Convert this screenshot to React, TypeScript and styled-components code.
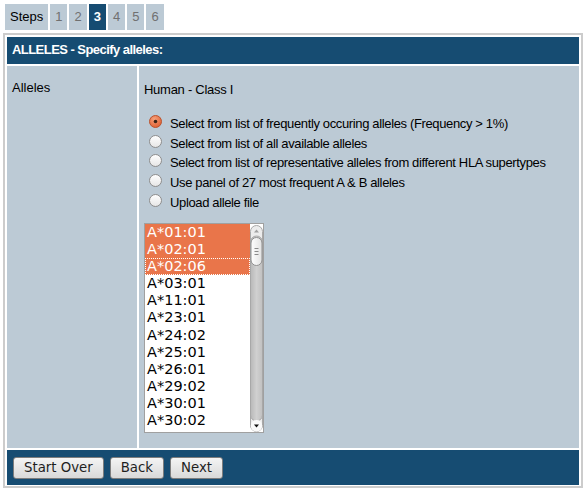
import React from "react";
import styled, { createGlobalStyle } from "styled-components";

const Global = createGlobalStyle`
  html, body { margin: 0; padding: 0; background: #fff; }
  body { font-family: "Liberation Sans", Arial, sans-serif; font-size: 13px; color: #000; }
`;

const BLUE = "#164c72";
const PALE = "#bccad5";

const Page = styled.div`
  padding: 4px 0 0 3px;
  width: 580px;
`;

const Tabs = styled.div`
  display: flex;
  gap: 2px;
  margin-left: 2px;
`;

const Tab = styled.div<{ $active?: boolean; $label?: boolean }>`
  height: 26px;
  line-height: 26px;
  padding: 0 5px;
  min-width: 7px;
  text-align: center;
  background: ${(p) => (p.$active ? BLUE : PALE)};
  color: ${(p) => (p.$active ? "#fff" : p.$label ? "#000" : "#707070")};
  font-weight: ${(p) => (p.$active ? "bold" : "normal")};
`;

const Box = styled.div`
  margin-top: 3px;
  border: 2px solid #cccccc;
  padding: 2px 2px 1px;
  background: #fff;
  display: grid;
  gap: 2px;
`;

const Header = styled.div`
  background: ${BLUE};
  color: #fff;
  font-weight: bold;
  height: 27px;
  box-sizing: border-box;
  padding: 5px 0 0 5px;
  line-height: 15px;
  letter-spacing: -0.55px;
`;

const BodyRow = styled.div`
  display: grid;
  grid-template-columns: 130px 1fr;
  gap: 2px;
`;

const LabelCell = styled.div`
  background: ${PALE};
  padding: 14px 5px 0;
  line-height: 15px;
`;

const ValueCell = styled.div`
  background: ${PALE};
  padding: 16px 5px 15px;
  display: flex;
  flex-direction: column;
`;

const Title = styled.div`
  line-height: 15px;
  letter-spacing: -0.27px;
`;

const RadioList = styled.div`
  margin-top: 15px;
  display: flex;
  flex-direction: column;
`;

const RadioRow = styled.div`
  height: 19.7px;
  display: flex;
  align-items: flex-start;
`;

const RadioMark = styled.svg`
  margin: 3px 8px 0 5px;
  flex: none;
`;

const RadioText = styled.span`
  margin-top: 4px;
  line-height: 15px;
  white-space: nowrap;
  letter-spacing: -0.36px;
`;

const ListBox = styled.div`
  margin-top: 12.5px;
  width: 120px;
  height: 210px;
  box-sizing: border-box;
  border: 1px solid #a0a0a0;
  background: #fff;
  display: flex;
  overflow: hidden;
`;

const Options = styled.div`
  flex: 1;
  overflow: hidden;
`;

const Option = styled.div<{ $sel?: boolean; $focus?: boolean }>`
  height: 17.1px;
  line-height: 17px;
  padding-left: 2px;
  box-sizing: border-box;
  font-family: "DejaVu Sans", sans-serif;
  font-size: 14.5px;
  background: ${(p) => (p.$sel ? "#e9754a" : "#fff")};
  color: ${(p) => (p.$sel ? "#fff" : "#000")};
  outline: ${(p) => (p.$focus ? "1px dotted #fff" : "none")};
  outline-offset: -1px;
  white-space: nowrap;
`;

const ScrollBar = styled.svg`
  flex: none;
  display: block;
  margin-top: 1px;
`;

const Footer = styled.div`
  background: ${BLUE};
  height: 35px;
  box-sizing: border-box;
  padding: 7px 6px 0;
  display: flex;
  align-items: flex-start;
  gap: 6px;
`;

const Button = styled.button`
  height: 22px;
  padding: 0 10px;
  border: 1px solid #7d7d7d;
  border-radius: 3px;
  background: linear-gradient(#f4f4f4, #d9d9d9);
  font-family: "DejaVu Sans", sans-serif;
  font-size: 13.3px;
  color: #1e1e1e;
  line-height: 20px;
  cursor: pointer;
`;

const Radio = ({ checked }: { checked?: boolean }) => (
  <RadioMark width="13" height="13" viewBox="0 0 13 13">
    <defs>
      <radialGradient id="ro" cx="0.4" cy="0.3" r="0.8">
        <stop offset="0" stopColor="#f6a07a" />
        <stop offset="1" stopColor="#dc5a2c" />
      </radialGradient>
      <linearGradient id="rw" x1="0" y1="0" x2="0" y2="1">
        <stop offset="0" stopColor="#ffffff" />
        <stop offset="1" stopColor="#e6e6e6" />
      </linearGradient>
    </defs>
    {checked ? (
      <>
        <circle cx="6.5" cy="6.5" r="6" fill="url(#ro)" stroke="#b9532e" />
        <circle cx="6.5" cy="6.5" r="1.8" fill="#3a2418" />
      </>
    ) : (
      <circle cx="6.5" cy="6.5" r="6" fill="url(#rw)" stroke="#8c8c8c" />
    )}
  </RadioMark>
);

const Scroll = () => (
  <ScrollBar width="13" height="207" viewBox="0 0 13 207">
    <defs>
      <linearGradient id="tr" x1="0" y1="0" x2="1" y2="0">
        <stop offset="0" stopColor="#b8b8b8" />
        <stop offset="0.5" stopColor="#d0d0d0" />
        <stop offset="1" stopColor="#c0c0c0" />
      </linearGradient>
      <linearGradient id="th" x1="0" y1="0" x2="1" y2="0">
        <stop offset="0" stopColor="#ffffff" />
        <stop offset="1" stopColor="#e2e2e2" />
      </linearGradient>
    </defs>
    <rect x="0.5" y="0.5" width="12" height="206" rx="6" fill="#ececec" stroke="#a8a8a8" />
    <rect x="0.5" y="11" width="12" height="185" rx="6" fill="url(#tr)" stroke="#a8a8a8" />
    <rect x="1" y="12.5" width="11" height="28" rx="5.5" fill="url(#th)" stroke="#8f8f8f" />
    <line x1="4.5" y1="23.5" x2="8.5" y2="23.5" stroke="#8a8a8a" />
    <line x1="4.5" y1="26.5" x2="8.5" y2="26.5" stroke="#8a8a8a" />
    <line x1="4.5" y1="29.5" x2="8.5" y2="29.5" stroke="#8a8a8a" />
    <path d="M4 7.5 L6.5 4.5 L9 7.5 Z" fill="#a0a0a0" />
    <rect x="1" y="195" width="11" height="11.5" rx="5" fill="#fafafa" />
    <path d="M4 199.5 L9 199.5 L6.5 202.5 Z" fill="#111" />
  </ScrollBar>
);

const alleles = [
  "A*01:01", "A*02:01", "A*02:06", "A*03:01", "A*11:01", "A*23:01",
  "A*24:02", "A*25:01", "A*26:01", "A*29:02", "A*30:01", "A*30:02",
];

const radios = [
  "Select from list of frequently occuring alleles (Frequency > 1%)",
  "Select from list of all available alleles",
  "Select from list of representative alleles from different HLA supertypes",
  "Use panel of 27 most frequent A & B alleles",
  "Upload allele file",
];

export default function App() {
  return (
    <>
      <Global />
      <Page>
        <Tabs>
          <Tab $label>Steps</Tab>
          {[1, 2, 3, 4, 5, 6].map((n) => (
            <Tab key={n} $active={n === 3}>{n}</Tab>
          ))}
        </Tabs>
        <Box>
          <Header>ALLELES - Specify alleles:</Header>
          <BodyRow>
            <LabelCell>Alleles</LabelCell>
            <ValueCell>
              <Title>Human - Class I</Title>
              <RadioList>
                {radios.map((r, i) => (
                  <RadioRow key={r}>
                    <Radio checked={i === 0} />
                    <RadioText>{r}</RadioText>
                  </RadioRow>
                ))}
              </RadioList>
              <ListBox>
                <Options>
                  {alleles.map((a, i) => (
                    <Option key={a} $sel={i < 3} $focus={i === 2}>{a}</Option>
                  ))}
                </Options>
                <Scroll />
              </ListBox>
            </ValueCell>
          </BodyRow>
          <Footer>
            <Button>Start Over</Button>
            <Button>Back</Button>
            <Button>Next</Button>
          </Footer>
        </Box>
      </Page>
    </>
  );
}
